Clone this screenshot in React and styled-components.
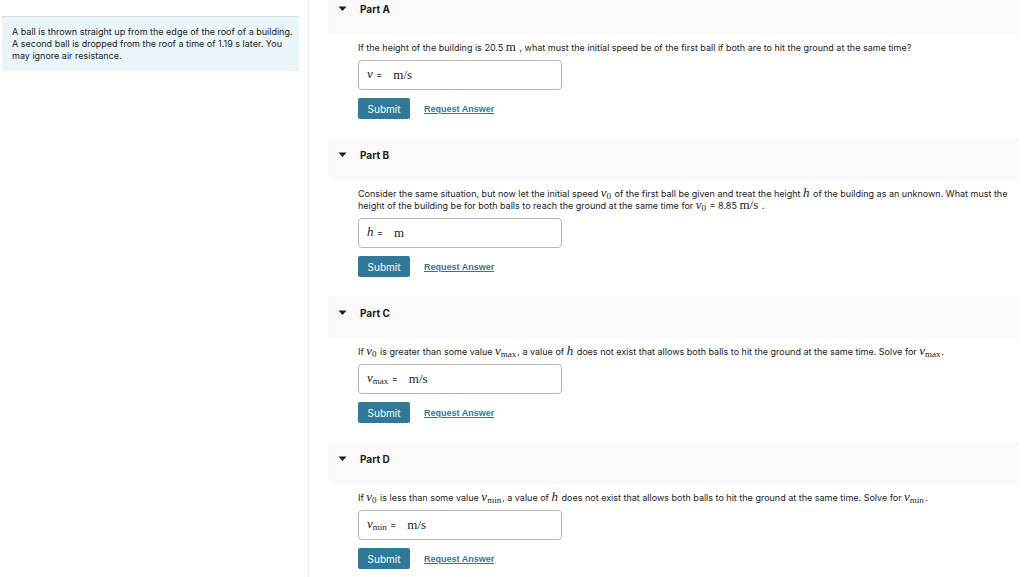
import React, { useState } from "react";
import styled, { createGlobalStyle } from "styled-components";

const GlobalStyle = createGlobalStyle`
  * {
    box-sizing: border-box;
  }
  body {
    margin: 0;
    background: #ffffff;
    color: #222222;
    font-family: Inter, Arial, Helvetica, sans-serif;
    font-size: 9px;
    line-height: 12px;
  }
`;

const StyledPage = styled.div`
  display: grid;
  grid-template-columns: 308px minmax(0, 1fr);
  height: 100vh;
  overflow: hidden;
`;

const StyledSidebar = styled.aside`
  padding: 16px 9px 0 2px;
`;

const StyledIntro = styled.p`
  margin: 0;
  padding: 9px 4px 9px 10px;
  background: #e9f5f8;
  border-top: 1px solid #d5dfe1;
`;

const StyledMain = styled.main`
  overflow: hidden;
  border-left: 1px solid #e6ebf2;
  padding: 0 5px 0 20px;
`;

const StyledParts = styled.div`
  margin-top: -8px;
`;

const StyledPartHeader = styled.button`
  display: flex;
  align-items: flex-start;
  gap: 13px;
  width: 100%;
  height: 42px;
  margin: 0;
  padding: 11px 9px;
  border: none;
  background: #f9f9f9;
  color: #1c1c1c;
  font: inherit;
  font-size: 10px;
  font-weight: bold;
  text-align: left;
  cursor: pointer;
`;

const StyledArrow = styled.svg`
  width: 9px;
  height: 12px;
  transform: ${(props) => (props.$open ? "none" : "rotate(-90deg)")};
`;

const StyledPartBody = styled.form`
  padding: 8px 0 19px 29px;
`;

const StyledQuestion = styled.p`
  margin: 0 0 6px;
`;

const StyledMath = styled.span`
  margin-right: 1px;
  font-family: "Liberation Serif", "Times New Roman", serif;
  font-size: 13px;
  line-height: 10px;

  sub {
    font-size: 9px;
    line-height: 0;
    vertical-align: -2px;
  }
`;

const StyledAnswerBox = styled.div`
  display: flex;
  align-items: center;
  width: 204px;
  max-width: 100%;
  height: 30px;
  padding: 0 8px;
  border: 1px solid #b5b5b5;
  border-radius: 4px;
`;

const StyledAnswerInput = styled.input`
  field-sizing: content;
  min-width: 11px;
  padding: 0;
  border: none;
  outline: none;
  background: transparent;
  font: inherit;
`;

const StyledActions = styled.div`
  display: flex;
  align-items: center;
  gap: 14px;
  margin-top: 8px;
`;

const StyledSubmit = styled.button`
  width: 52px;
  height: 21px;
  padding: 0;
  border: none;
  border-radius: 2px;
  background: #317999;
  color: #ffffff;
  font: inherit;
  font-size: 10px;
  cursor: pointer;
`;

const StyledRequest = styled.a`
  color: #317999;
  font-family: "Liberation Sans", Arial, sans-serif;
  font-weight: bold;
`;

function Variable({ name, sub }) {
  return (
    <StyledMath>
      <i>{name}</i>
      {sub && <sub>{sub}</sub>}
    </StyledMath>
  );
}

const parts = [
  {
    id: "A",
    variable: "v",
    unit: "m/s",
    question: (
      <>
        If the height of the building is 20.5 <StyledMath>m</StyledMath> , what
        must the initial speed be of the first ball if both are to hit the
        ground at the same time?
      </>
    ),
  },
  {
    id: "B",
    variable: "h",
    unit: "m",
    question: (
      <>
        Consider the same situation, but now let the initial speed{" "}
        <Variable name="v" sub="0" /> of the first ball be given and treat the
        height <Variable name="h" /> of the building as an unknown. What must
        the height of the building be for both balls to reach the ground at the
        same time for <Variable name="v" sub="0" /> = 8.85{" "}
        <StyledMath>m/s</StyledMath> .
      </>
    ),
  },
  {
    id: "C",
    variable: "v",
    sub: "max",
    unit: "m/s",
    question: (
      <>
        If <Variable name="v" sub="0" /> is greater than some value{" "}
        <Variable name="v" sub="max" />, a value of <Variable name="h" /> does
        not exist that allows both balls to hit the ground at the same time.
        Solve for <Variable name="v" sub="max" />.
      </>
    ),
  },
  {
    id: "D",
    variable: "v",
    sub: "min",
    unit: "m/s",
    question: (
      <>
        If <Variable name="v" sub="0" /> is less than some value{" "}
        <Variable name="v" sub="min" />, a value of <Variable name="h" /> does
        not exist that allows both balls to hit the ground at the same time.
        Solve for <Variable name="v" sub="min" />.
      </>
    ),
  },
];

function Part({ part }) {
  const [open, setOpen] = useState(true);
  const [answer, setAnswer] = useState("");
  const inputId = `answer-${part.id}`;

  return (
    <section>
      <StyledPartHeader
        type="button"
        aria-expanded={open}
        onClick={() => setOpen(!open)}
      >
        <StyledArrow $open={open} viewBox="0 0 9 12" aria-hidden="true">
          <path d="M0.5 3.5h8L4.5 8z" fill="#1c1c1c" />
        </StyledArrow>
        Part {part.id}
      </StyledPartHeader>
      {open && (
        <StyledPartBody onSubmit={(e) => e.preventDefault()}>
          <StyledQuestion>{part.question}</StyledQuestion>
          <StyledAnswerBox>
            <label htmlFor={inputId}>
              <Variable name={part.variable} sub={part.sub} /> =
            </label>
            <StyledAnswerInput
              id={inputId}
              value={answer}
              onChange={(e) => setAnswer(e.target.value)}
            />
            <StyledMath>{part.unit}</StyledMath>
          </StyledAnswerBox>
          <StyledActions>
            <StyledSubmit type="submit">Submit</StyledSubmit>
            <StyledRequest href="#request">Request Answer</StyledRequest>
          </StyledActions>
        </StyledPartBody>
      )}
    </section>
  );
}

export default function App() {
  return (
    <>
      <GlobalStyle />
      <StyledPage>
        <StyledSidebar>
          <StyledIntro>
            A ball is thrown straight up from the edge of the roof of a
            building. A second ball is dropped from the roof a time of 1.19 s
            later. You may ignore air resistance.
          </StyledIntro>
        </StyledSidebar>
        <StyledMain>
          <StyledParts>
            {parts.map((part) => (
              <Part key={part.id} part={part} />
            ))}
          </StyledParts>
        </StyledMain>
      </StyledPage>
    </>
  );
}
